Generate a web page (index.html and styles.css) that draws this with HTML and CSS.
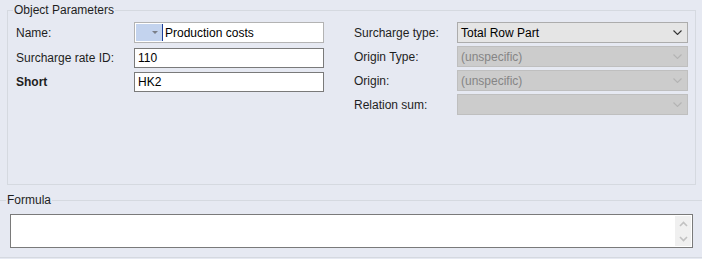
FILE: index.html
```html
<!DOCTYPE html>
<html lang="en">
<head>
  <meta charset="UTF-8">
  <title>Object Parameters</title>
  <link rel="stylesheet" href="styles.css">
</head>
<body>
  <fieldset class="group params">
    <legend>Object Parameters</legend>
    <div class="cols">
      <div class="col left">
        <div class="row r1">
          <label>Name:</label>
          <div class="box name-box">
            <span class="picker"><span class="tri"></span></span>
            <span class="caret"></span>
            <span class="val">Production costs</span>
          </div>
        </div>
        <div class="row r2">
          <label>Surcharge rate ID:</label>
          <div class="box"><span class="val">110</span></div>
        </div>
        <div class="row r3">
          <label class="bold">Short</label>
          <div class="box"><span class="val">HK2</span></div>
        </div>
      </div>
      <div class="col right">
        <div class="row">
          <label>Surcharge type:</label>
          <div class="combo">
            <span class="val">Total Row Part</span>
            <svg class="chev" width="9" height="5" viewBox="0 0 9 5"><path d="M0.5 0.5 L4.5 4.5 L8.5 0.5" fill="none" stroke="#333" stroke-width="1.1"/></svg>
          </div>
        </div>
        <div class="row">
          <label>Origin Type:</label>
          <div class="combo off">
            <span class="val">(unspecific)</span>
            <svg class="chev" width="9" height="5" viewBox="0 0 9 5"><path d="M0.5 0.5 L4.5 4.5 L8.5 0.5" fill="none" stroke="#b4b4b4" stroke-width="1.1"/></svg>
          </div>
        </div>
        <div class="row">
          <label>Origin:</label>
          <div class="combo off">
            <span class="val">(unspecific)</span>
            <svg class="chev" width="9" height="5" viewBox="0 0 9 5"><path d="M0.5 0.5 L4.5 4.5 L8.5 0.5" fill="none" stroke="#b4b4b4" stroke-width="1.1"/></svg>
          </div>
        </div>
        <div class="row">
          <label>Relation sum:</label>
          <div class="combo off">
            <span class="val"></span>
            <svg class="chev" width="9" height="5" viewBox="0 0 9 5"><path d="M0.5 0.5 L4.5 4.5 L8.5 0.5" fill="none" stroke="#b4b4b4" stroke-width="1.1"/></svg>
          </div>
        </div>
      </div>
    </div>
  </fieldset>

  <fieldset class="group formula">
    <legend>Formula</legend>
    <div class="memo">
      <div class="scroll">
        <svg width="9" height="6" viewBox="0 0 9 6"><path d="M1 5 L4.5 1.5 L8 5" fill="none" stroke="#c2c2c2" stroke-width="1.6"/></svg>
        <svg width="9" height="6" viewBox="0 0 9 6"><path d="M1 1 L4.5 4.5 L8 1" fill="none" stroke="#c2c2c2" stroke-width="1.6"/></svg>
      </div>
    </div>
  </fieldset>
</body>
</html>
```

FILE: styles.css
```css
/* Reset */
* {
  margin: 0;
  padding: 0;
  box-sizing: border-box;
}

body {
  font-family: "Liberation Sans", Arial, sans-serif;
  font-size: 12px;
  color: #1e1e1e;
  background-color: #e6e9f2;
  width: 702px;
  height: 259px;
  overflow: hidden;
}

/* Group boxes */
.group {
  border: 1px solid #d5d9e0;
}

.group legend {
  line-height: 16px;
  height: 16px;
  padding: 0 1px;
  color: #1e1e1e;
}

.params {
  margin: 2px 6px 0 7px;
  padding: 4px 0 0 0;
}

.params legend {
  margin-left: 5px;
}

.cols {
  display: flex;
  height: 162px;
}

.col {
  display: flex;
  flex-direction: column;
}

.left {
  padding-left: 8px;
  width: 316px;
}

.right {
  margin-left: 30px;
  width: 334px;
  gap: 3px;
}

.row {
  display: flex;
  align-items: center;
  height: 21px;
}

.left .r2 {
  margin-top: 5px;
  height: 20px;
}

.left .r3 {
  margin-top: 4px;
  height: 20px;
}

.left label {
  width: 118px;
}

.right label {
  width: 103px;
}

.bold {
  font-weight: bold;
}

/* Text boxes */
.box {
  display: flex;
  align-items: center;
  width: 190px;
  height: 100%;
  background: #fff;
  border: 1px solid #7a7a7a;
  color: #000;
  padding-left: 3px;
}

.name-box {
  border-color: #b3b3b3;
  padding: 1px 0 1px 1px;
}

.picker {
  display: flex;
  align-items: center;
  justify-content: flex-end;
  width: 26px;
  height: 100%;
  background: #c3d3ee;
  padding-right: 4px;
}

.tri {
  width: 0;
  height: 0;
  border-left: 3px solid transparent;
  border-right: 3px solid transparent;
  border-top: 3px solid #7b7f88;
}

.caret {
  width: 1px;
  height: 100%;
  background: #1d3f9a;
  margin-right: 2px;
}

/* Combo boxes */
.combo {
  display: flex;
  align-items: center;
  justify-content: space-between;
  width: 231px;
  height: 100%;
  background: #e5e5e5;
  border: 1px solid #acacac;
  padding: 0 5px 0 3px;
  color: #000;
}

.combo.off {
  background: #cccccc;
  border-color: #bfbfbf;
  color: #858585;
}

/* Formula */
.formula {
  margin-top: 7px;
  border-left: none;
  border-right: none;
  padding: 6px 0 9px 0;
}

.formula legend {
  margin-left: 6px;
}

.memo {
  margin-left: 10px;
  width: 683px;
  height: 34px;
  background: #fff;
  border: 1px solid #7a7a7a;
  display: flex;
  justify-content: flex-end;
  padding: 1px;
}

.scroll {
  width: 16px;
  height: 100%;
  background: #f0f0f0;
  display: flex;
  flex-direction: column;
  align-items: center;
  justify-content: space-around;
}
```
